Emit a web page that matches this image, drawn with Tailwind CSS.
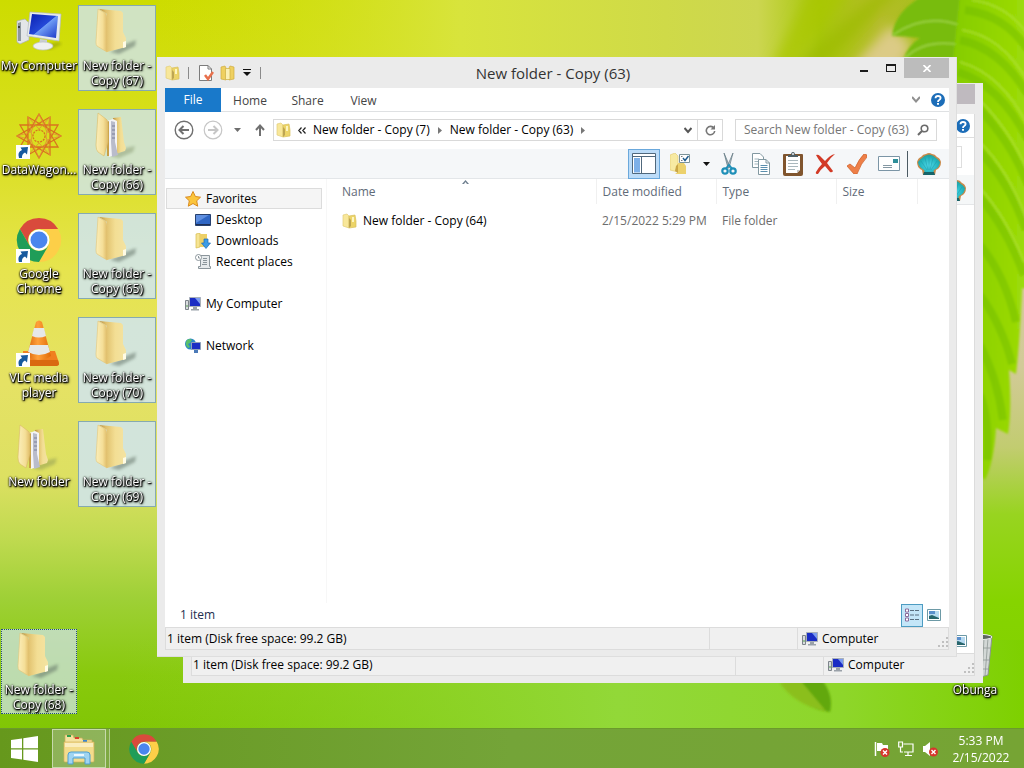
<!DOCTYPE html>
<html lang="en">
<head>
    <meta charset="UTF-8">
    <meta name="viewport" content="width=device-width, initial-scale=1.0">
    <title>New folder - Copy (63)</title>
    <script src="https://cdn.jsdelivr.net/npm/@tailwindcss/browser@4"></script>
    <style>
        body {
            font-family: 'Open Sans', 'Noto Sans', sans-serif;
        }
        .desk-label {
            color: white;
            text-shadow: 1px 1px 1px #000, 0 0 2px #000, 1px 1px 3px #000, 0 1px 2px #000;
        }
    </style>
</head>
<body class="h-screen overflow-hidden flex flex-col relative text-xs text-black bg-[#86cc14]">

    <!-- Icon sprites -->
    <svg class="absolute w-0 h-0" aria-hidden="true">
        <defs>
            <linearGradient id="gFlap" x1="0" x2="1" y1="0" y2="0"><stop offset="0" stop-color="#fbeeba"/><stop offset=".6" stop-color="#f5df98"/><stop offset="1" stop-color="#e0bc68"/></linearGradient>
            <linearGradient id="gBody" x1="0" x2="1" y1="0" y2="0"><stop offset="0" stop-color="#b98f3c"/><stop offset=".25" stop-color="#e0c06c"/><stop offset=".6" stop-color="#f3de94"/><stop offset="1" stop-color="#f3e3a2"/></linearGradient>
            <linearGradient id="gScreen" x1="0" x2="1" y1="0" y2="1"><stop offset="0" stop-color="#0a1fb0"/><stop offset=".5" stop-color="#2448d8"/><stop offset=".52" stop-color="#6f9cf5"/><stop offset="1" stop-color="#1a36c8"/></linearGradient>
            <linearGradient id="gCone" x1="0" x2="1" y1="0" y2="0"><stop offset="0" stop-color="#d9640a"/><stop offset=".45" stop-color="#ffa03a"/><stop offset="1" stop-color="#e06a08"/></linearGradient>
            <radialGradient id="gShell" cx=".5" cy=".6" r=".6"><stop offset="0" stop-color="#4fd8e8"/><stop offset=".7" stop-color="#22b3bd"/><stop offset="1" stop-color="#2a9a90"/></radialGradient>
            <filter id="soft"><feGaussianBlur stdDeviation="1.5"/></filter>
        </defs>
        <symbol id="folder" viewBox="0 0 48 48">
            <path d="M17 44L33 36L43 32L42 38L26 46Z" fill="#5b6a60" opacity=".5" filter="url(#soft)"/>
            <path d="M6 1L28 3L30 5L30 24L33 30V39L14 44V6Z" fill="url(#gBody)"/>
            <path d="M5 1L12 5Q14 6 14 10V44L4 38Q3 37 3 34Z" fill="url(#gFlap)" stroke="#e2c577" stroke-width=".6"/>
            <path d="M30 34L33 33V39L30 40Z" fill="#fffbe4"/>
        </symbol>
        <symbol id="folder-docs" viewBox="0 0 48 48">
            <path d="M17 44L33 36L42 34L40 40L26 46Z" fill="#6b7a50" opacity=".35" filter="url(#soft)"/>
            <path d="M20 6L28 5L31 30L33 36L32 39L22 42Z" fill="url(#gBody)"/>
            <path d="M14 9L20 7L24 9L24 42L16 45Z" fill="#f4f4f6"/>
            <path d="M18 9L22 10L22 30L25 43L19 45L18 30Z" fill="#b9bccb"/>
            <path d="M19 14H22M19 18H22M19 22H22M19 26H22" stroke="#7b7f9a"/>
            <path d="M14 10L16 9L16 44L14 44Z" fill="#c79f45"/>
            <path d="M5 1L13 7Q15 8 15 12L15 30L11 44L5 40Q3 38 3 33Z" fill="url(#gFlap)" stroke="#d8bb68" stroke-width=".6"/>
        </symbol>
        <symbol id="folder-sm" viewBox="0 0 16 16">
            <path d="M1 2L5 1L7 3V15L1 13Z" fill="#f8e79a" stroke="#e3cd78" stroke-width=".7"/>
            <path d="M7 3L13 2L14 8V14L7 15Z" fill="#ecd468" stroke="#d8c05c" stroke-width=".7"/>
            <path d="M7 5L9 7V13L7 15Z" fill="#bda553"/>
            <path d="M10 4H12V9H10Z" fill="#fdf5c0"/>
        </symbol>
        <symbol id="chrome" viewBox="0 0 48 48">
            <path d="M4.900 13A22 22 0 0 1 43.100 13H24A11 11 0 0 0 14.500 29.500Z" fill="#d94a3c"/>
            <path d="M43.100 13A22 22 0 0 1 24 46L33.500 29.500A11 11 0 0 0 24 13Z" fill="#fdcf48"/>
            <path d="M24 46A22 22 0 0 1 4.900 13L14.500 29.500A11 11 0 0 0 33.500 29.500Z" fill="#1f9d58"/>
            <circle cx="24" cy="24" r="10.500" fill="#fff"/>
            <circle cx="24" cy="24" r="8.500" fill="#4a86ee"/>
        </symbol>
        <symbol id="computer-sm" viewBox="0 0 16 16">
            <path d="M.5 4.500H3.500V13.500H.5Z" fill="#d9dcdf" stroke="#7d848b"/>
            <path d="M1 10H3" stroke="#55a04a"/>
            <path d="M4.500 1.500H15.500V10.500H4.500Z" fill="#1a2cc4" stroke="#a9b0b8"/>
            <path d="M10 2L15 2V8Z" fill="#7c9cf0"/>
            <path d="M8 11H12V13H14V14.500H6V13H8Z" fill="#9aa1a9"/>
        </symbol>
        <symbol id="shortcut" viewBox="0 0 14 14">
            <path d="M0 0H14V14H0Z" fill="#fff"/>
            <path d="M3 13Q1 7 6 5L4.500 2.500L12 2L11 9.500L9 7.500Q5.500 9 6 13Z" fill="#175a9e"/>
        </symbol>
        <symbol id="help" viewBox="0 0 14 14">
            <circle cx="7" cy="7" r="7" fill="#1c6db8"/>
            <path d="M4.500 5.200Q4.600 3 7 3Q9.600 3 9.600 5.100Q9.600 6.200 8.200 7Q7 7.600 7 8.900" fill="none" stroke="#fff" stroke-width="1.800"/>
            <path d="M6 9.900H8V11.800H6Z" fill="#fff"/>
        </symbol>
        <symbol id="shell" viewBox="0 0 24 24">
            <path d="M6 23L5 18Q0 16 0 10Q1 6 4 5Q6 2 9 2Q12 0 15 2Q18 2 20 5Q23 6 24 10Q24 16 19 18L18 23Z" fill="#c98a4a"/>
            <path d="M8 21L7 18Q1 15 1 10Q3 7 5 6Q8 3 10 3Q12 2 14 3Q16 3 19 6Q21 7 23 10Q23 15 17 18L16 21Z" fill="url(#gShell)"/>
            <path d="M10 18L4 9M11 18L8 6M12 18V4M13 18L16 6M14 18L20 9" stroke="#2097a6" stroke-width=".5"/>
            <path d="M7 20H17L18 23H6Z" fill="#17646a"/>
        </symbol>
        <symbol id="picture" viewBox="0 0 14 12">
            <path d="M.5 .5H13.500V11.500H.5Z" fill="#fff" stroke="#6d9aa6"/>
            <path d="M2 2H12V10H2Z" fill="#b5d9f0"/>
            <path d="M2 7L5 6L12 9V10H2Z" fill="#27656c"/>
            <path d="M2 2H8V5H2Z" fill="#5a8fcc"/>
        </symbol>
        <symbol id="grip" viewBox="0 0 10 10">
            <path d="M8 0H10V2H8ZM4 4H6V6H4ZM8 4H10V6H8ZM0 8H2V10H0ZM4 8H6V10H4ZM8 8H10V10H8Z" fill="#c0c0c0"/>
        </symbol>
    </svg>

    <!-- Wallpaper -->
    <svg class="absolute inset-0 w-full h-full" viewBox="0 0 1024 768" preserveAspectRatio="none" aria-hidden="true">
        <defs>
            <linearGradient id="sky" x1="0" x2="0" y1="0" y2="1">
                <stop offset="0" stop-color="#cddc00"/><stop offset=".2" stop-color="#dadf22"/><stop offset=".35" stop-color="#e6e44e"/>
                <stop offset=".5" stop-color="#e5e264"/><stop offset=".62" stop-color="#dde062"/><stop offset=".7" stop-color="#c0da50"/>
                <stop offset=".78" stop-color="#9ed036"/><stop offset=".88" stop-color="#88c90c"/><stop offset="1" stop-color="#7cc400"/>
            </linearGradient>
            <linearGradient id="band" x1="0" x2="1" y1="0" y2="0">
                <stop offset=".15" stop-color="#d2e010" stop-opacity="0"/><stop offset=".45" stop-color="#d8e43c"/><stop offset=".65" stop-color="#cfda48"/>
                <stop offset=".74" stop-color="#ccd650"/><stop offset=".8" stop-color="#a6c60a"/><stop offset=".86" stop-color="#b4bc28"/><stop offset="1" stop-color="#8cc800"/>
            </linearGradient>
            <linearGradient id="east" x1="0" x2="0" y1="0" y2="1">
                <stop offset="0" stop-color="#d8cfa0"/><stop offset=".4" stop-color="#d2ca98"/><stop offset=".52" stop-color="#c2cc70"/>
                <stop offset=".62" stop-color="#98d420"/><stop offset=".75" stop-color="#86d400"/><stop offset="1" stop-color="#7fcc00"/>
            </linearGradient>
            <linearGradient id="low" x1="0" x2="1" y1="0" y2="0">
                <stop offset="0" stop-color="#8cd628" stop-opacity="0"/><stop offset=".55" stop-color="#92d838"/><stop offset=".8" stop-color="#8ed62a"/><stop offset="1" stop-color="#7ed000"/>
            </linearGradient>
            <linearGradient id="leaf" x1="0" x2="1" y1="0" y2="0"><stop offset="0" stop-color="#84cc00"/><stop offset="1" stop-color="#9edc08"/></linearGradient>
            <filter id="haze"><feGaussianBlur stdDeviation="6"/></filter>
            <filter id="edge"><feGaussianBlur stdDeviation="1.200"/></filter>
        </defs>
        <path d="M0 0H1024V768H0Z" fill="url(#sky)"/>
        <path d="M0 0H1024V120H0Z" fill="url(#band)"/>
        <path d="M940 100H1024V768H940Z" fill="url(#east)"/>
        <path d="M120 640H1024V768H120Z" fill="url(#low)"/>
        <g filter="url(#haze)">
            <path d="M810 -10H850L790 70H770Z" fill="#a9c800" opacity=".7"/>
            <path d="M880 -10H900L820 70H790Z" fill="#9cba08" opacity=".7"/>
            <path d="M890 25L912 45L895 80H840Z" fill="#dccb86"/>
        </g>
        <g filter="url(#edge)">
            <path d="M925 -5H960V60H903Q908 45 920 38Q905 36 892 36Q895 10 925 -5Z" fill="#78bc10"/>
            <path d="M893 35Q925 12 962 26M905 58Q925 38 962 45" fill="none" stroke="#9ad03c" stroke-width="2"/>
            <path d="M960 -5H1030V290L1022 288Q1020 340 1016 374L1009 370Q1012 410 1008 434L996 428Q994 462 985 480L975 470V90H950Z" fill="url(#leaf)"/>
            <g fill="none" stroke="#6cb804" stroke-width="8" opacity=".4">
                <path d="M965 10Q1005 15 1028 50"/><path d="M960 40Q1000 48 1028 95"/><path d="M958 72Q1000 85 1028 140"/>
                <path d="M978 108Q1010 140 1028 185"/><path d="M980 152Q1008 180 1026 230"/><path d="M980 198Q1005 225 1024 275"/>
                <path d="M980 245Q1005 275 1016 322"/><path d="M980 295Q1002 325 1012 364"/><path d="M980 345Q998 380 1003 420"/><path d="M980 395Q990 420 987 460"/>
            </g>
            <g fill="none" stroke="#b8e63c" stroke-width="2" opacity=".6">
                <path d="M972 0Q1008 5 1028 35"/><path d="M962 30Q1002 36 1028 82"/><path d="M960 62Q1002 74 1028 126"/>
                <path d="M978 98Q1010 130 1028 172"/><path d="M980 142Q1008 170 1026 218"/><path d="M980 188Q1005 215 1024 262"/>
            </g>
            <path d="M785 683Q800 708 830 712Q834 695 822 680Z" fill="#62a80c"/>
            <path d="M780 683Q795 705 826 711L800 680Z" fill="#8bbf1c"/>
        </g>
    </svg>

    <!-- Desktop -->
    <main class="flex-1 relative min-h-0">
        <ul class="grid grid-cols-[repeat(13,78px)] auto-rows-[104px] pt-[5px] items-start text-center leading-[15px]">
            <li class="col-start-1 row-start-1 h-[85px] pt-[3px]">
                <svg class="w-12 h-12 mx-auto mb-[2px]" viewBox="0 0 48 48">
                    <path d="M26 38L44 34L47 36L34 42Z" fill="#6f7a10" opacity=".4" filter="url(#soft)"/>
                    <path d="M2 13L10 11L14 15V32L5 36L2 34Z" fill="#e3e6e8" stroke="#a9afb3" stroke-width=".7"/>
                    <path d="M3 15L6 14V33L3 33Z" fill="#8e979d"/><circle cx="4" cy="19" r="1" fill="#222"/>
                    <path d="M15 4L46 6L44 33L12 28Z" fill="#e8ebed" stroke="#b5bbc0" stroke-width=".7"/>
                    <path d="M17 6L43 8L41 30L14 26Z" fill="url(#gScreen)"/>
                    <path d="M25 31L32 32V36L24 36Z" fill="#c9ced2"/><ellipse cx="28" cy="38" rx="10" ry="4" fill="#eef0f1" stroke="#bcc2c6" stroke-width=".7"/>
                </svg>
                <span class="desk-label">My Computer</span>
            </li>
            <li class="col-start-1 row-start-2 h-[85px] pt-[3px]">
                <svg class="w-12 h-12 mx-auto mb-[2px]" viewBox="0 0 48 48" fill="none" stroke="#d9731e" stroke-width="1.300">
                    <path d="M24 2L43 35H5ZM35 5V43L2 24ZM43 13L24 46L5 13ZM46 24L13 43V5Z"/>
                    <path d="M24 2L32 20L46 24L32 28L24 46L16 28L2 24L16 20ZM35 5L31 24L35 43L24 31L13 43L17 24L13 5L24 17Z" stroke="#e08a3a" stroke-width=".8"/>
                    <circle cx="24" cy="24" r="6" stroke-dasharray="2 1"/>
                    <use href="#shortcut" x="1" y="33" width="14" height="14" stroke="none"/>
                </svg>
                <span class="desk-label">DataWagon...</span>
            </li>
            <li class="col-start-1 row-start-3 h-[85px] pt-[3px]">
                <svg class="w-12 h-12 mx-auto mb-[2px]" viewBox="0 0 48 48">
                    <use href="#chrome" width="48" height="48"/>
                    <use href="#shortcut" x="1" y="33" width="14" height="14"/>
                </svg>
                <span class="desk-label block">Google<br>Chrome</span>
            </li>
            <li class="col-start-1 row-start-4 h-[85px] pt-[3px]">
                <svg class="w-12 h-12 mx-auto mb-[2px]" viewBox="0 0 48 48">
                    <path d="M8 31L40 31L44 43Q44 46 40 46H8Z" fill="#f08020"/>
                    <path d="M8 40H43L44 44Q44 46 40 46H8Z" fill="#d96a10"/>
                    <path d="M21 2Q24 -1 27 2L36 36Q24 44 12 36Z" fill="url(#gCone)"/>
                    <path d="M19 8H29L31 16Q24 19 17 16ZM15 25H33L35 32Q24 38 13 32Z" fill="#e6e8e8"/>
                    <use href="#shortcut" x="1" y="33" width="14" height="14"/>
                </svg>
                <span class="desk-label block">VLC media<br>player</span>
            </li>
            <li class="col-start-1 row-start-5 h-[85px] pt-[3px]">
                <svg class="w-12 h-12 mx-auto mb-[2px]"><use href="#folder-docs"/></svg>
                <span class="desk-label">New folder</span>
            </li>
            <li class="col-start-1 row-start-7 h-[85px] mx-px pt-[2px] border border-dotted border-[#24507a] bg-[#cfe2e6]/75">
                <svg class="w-12 h-12 mx-auto mb-[2px]"><use href="#folder"/></svg>
                <span class="desk-label block">New folder -<br>Copy (68)</span>
            </li>
            <li class="col-start-2 row-start-1 h-[86px] pt-[2px] border border-[#86aab0] bg-[#d0e4e4]/85">
                <svg class="w-12 h-12 mx-auto mb-[2px]"><use href="#folder"/></svg>
                <span class="desk-label block">New folder -<br>Copy (67)</span>
            </li>
            <li class="col-start-2 row-start-2 h-[86px] pt-[2px] border border-[#86aab0] bg-[#d0e4e4]/85">
                <svg class="w-12 h-12 mx-auto mb-[2px]"><use href="#folder-docs"/></svg>
                <span class="desk-label block">New folder -<br>Copy (66)</span>
            </li>
            <li class="col-start-2 row-start-3 h-[86px] pt-[2px] border border-[#86aab0] bg-[#d0e4e8]/90">
                <svg class="w-12 h-12 mx-auto mb-[2px]"><use href="#folder"/></svg>
                <span class="desk-label block">New folder -<br>Copy (65)</span>
            </li>
            <li class="col-start-2 row-start-4 h-[86px] pt-[2px] border border-[#86aab0] bg-[#d0e4e8]/90">
                <svg class="w-12 h-12 mx-auto mb-[2px]"><use href="#folder"/></svg>
                <span class="desk-label block">New folder -<br>Copy (70)</span>
            </li>
            <li class="col-start-2 row-start-5 h-[86px] pt-[2px] border border-[#86aab0] bg-[#d0e4e8]/90">
                <svg class="w-12 h-12 mx-auto mb-[2px]"><use href="#folder"/></svg>
                <span class="desk-label block">New folder -<br>Copy (69)</span>
            </li>
            <li class="col-start-13 row-start-7 h-[85px] pt-[3px]">
                <svg class="w-12 h-12 mx-auto mb-[2px]" viewBox="0 0 48 48">
                    <path d="M8 4L41 4L37 43Q24 48 12 43Z" fill="#d3d8d6" stroke="#8b9490"/>
                    <path d="M33 6L31 45M37 6L34 44M10 16H40M11 28H39M12 37H38" stroke="#8f9895" stroke-width=".8"/>
                    <ellipse cx="24" cy="5" rx="17" ry="3" fill="#5d6663" stroke="#e8ecea"/>
                </svg>
                <span class="desk-label">Obunga</span>
            </li>
        </ul>

        <!-- Window behind -->
        <section class="absolute left-[183px] right-[41px] top-[83px] bottom-[45px] bg-[#ebebeb] px-2 pb-[7px] flex flex-col" aria-label="Background window">
            <div class="h-[31px] flex justify-end"><div class="w-[45px] h-5 mt-px bg-[#bfbabf]"></div></div>
            <div class="flex-1 flex flex-col bg-white border-r border-[#dcdcdc]">
                <div class="h-6 flex items-center justify-end pr-1 border-b border-[#dedede]"><svg class="w-[14px] h-[14px]"><use href="#help"/></svg></div>
                <div class="h-[37px] flex items-center justify-end pr-3"><div class="w-[202px] h-[22px] border border-[#dedede]"></div></div>
                <div class="h-[30px] flex items-center justify-end pr-2 bg-[#f5f7f8] border-b border-[#e4e6e8]"><svg class="w-6 h-6"><use href="#shell"/></svg></div>
                <div class="flex-1"></div>
                <div class="h-6 flex items-center justify-end pr-[7px]"><svg class="w-[14px] h-3"><use href="#picture"/></svg></div>
            </div>
            <footer class="h-[23px] flex items-center bg-[#f0f0f0] border border-[#dcdcdc]">
                <span class="flex-1 pl-px">1 item (Disk free space: 99.2 GB)</span>
                <span class="w-[89px] h-full border-x border-[#dcdcdc]"></span>
                <span class="w-[150px] flex items-center gap-1 pl-1"><svg class="w-4 h-4"><use href="#computer-sm"/></svg>Computer
                    <svg class="w-[10px] h-[10px] ml-auto self-end"><use href="#grip"/></svg>
                </span>
            </footer>
        </section>

        <!-- Explorer window -->
        <section class="absolute left-[157px] right-[67px] top-[57px] bottom-[71px] bg-[#ebebeb] px-2 pb-[7px] flex flex-col shadow-[inset_-1px_-1px_0_#dedede]">
            <!-- Title bar -->
            <header class="h-[31px] shrink-0 flex items-center">
                <div class="flex-1 flex items-center text-[#8a8a8a]">
                    <svg class="w-4 h-4"><use href="#folder-sm"/></svg>
                    <span class="w-px h-3 ml-[7px] bg-[#8a8a8a]"></span>
                    <button class="ml-[9px]" aria-label="Properties">
                        <svg class="w-4 h-4" viewBox="0 0 16 16"><path d="M1.500 .5H10L13.500 4V15.500H1.500Z" fill="#fff" stroke="#7c7c7c"/><path d="M10 .5V4H13.500" fill="none" stroke="#7c7c7c"/><path d="M7 10L10 14L15 7" fill="none" stroke="#e8704c" stroke-width="2.500"/></svg>
                    </button>
                    <button class="ml-[6px]" aria-label="New folder"><svg class="w-4 h-4" viewBox="0 0 16 16"><path d="M1 2L5 1L6 3V15L1 14ZM9 3L10 1L14 2V14L9 15Z" fill="#efd060" stroke="#cfac40" stroke-width=".7"/><path d="M5.500 3.500H10V14.500H5.500Z" fill="#fbf0b4" stroke="#cfb043" stroke-width=".7"/></svg></button>
                    <button class="ml-[7px]" aria-label="Customize toolbar"><svg class="w-2 h-[7px]" viewBox="0 0 8 7"><path d="M0 0H8V1H0ZM0 3H8L4 7Z" fill="#111"/></svg></button>
                    <span class="w-px h-3 ml-[9px] bg-[#8a8a8a]"></span>
                </div>
                <h1 class="text-[15px] leading-[20px] text-[#333] pr-2">New folder - Copy (63)</h1>
                <div class="flex-1 flex justify-end self-start mt-px">
                    <button class="w-[27px] h-5 grid place-items-center" aria-label="Minimize"><svg class="w-2 h-5" viewBox="0 0 8 20"><path d="M0 12H8V14H0Z" fill="#1b1b1b"/></svg></button>
                    <button class="w-[27px] h-5 grid place-items-center" aria-label="Maximize"><svg class="w-[10px] h-2" viewBox="0 0 10 8"><path d="M0 0H10V8H0ZM1 2V7H9V2Z" fill="#1b1b1b" fill-rule="evenodd"/></svg></button>
                    <button class="w-[45px] h-5 grid place-items-center bg-[#bcbcbc]" aria-label="Close"><svg class="w-2 h-[7px]" viewBox="0 0 8 7"><path d="M.5 0L7.500 7M7.500 0L.5 7" stroke="#fff" stroke-width="1.700"/></svg></button>
                </div>
            </header>

            <!-- Ribbon tabs -->
            <nav class="h-6 shrink-0 flex items-center bg-white border-b border-[#dfe1e3] text-[#444]">
                <button class="w-14 h-6 bg-[#1979ca] text-white">File</button>
                <button class="w-[58px] pt-[2px]">Home</button>
                <button class="w-[57px] pt-[2px]">Share</button>
                <button class="w-[55px] pt-[2px]">View</button>
                <button class="ml-auto" aria-label="Expand ribbon"><svg class="w-2 h-[7px]" viewBox="0 0 8 7"><path d="M0 1L4 5.500L8 1" fill="none" stroke="#8f8f8f" stroke-width="2"/></svg></button>
                <button class="ml-[11px] mr-1" aria-label="Help"><svg class="w-[14px] h-[14px]"><use href="#help"/></svg></button>
            </nav>

            <!-- Address bar -->
            <div class="h-[37px] shrink-0 flex items-center bg-white pl-[9px] pr-3 pb-px">
                <button aria-label="Back"><svg class="w-5 h-5" viewBox="0 0 20 20" fill="none" stroke="#707070"><circle cx="10" cy="10" r="8.800" stroke-width="1.400"/><path d="M15 10H6M9.500 6L5.500 10L9.500 14" stroke-width="2"/></svg></button>
                <button class="ml-[9px]" aria-label="Forward"><svg class="w-5 h-5" viewBox="0 0 20 20" fill="none" stroke="#c6c6c6"><circle cx="10" cy="10" r="8.800" stroke-width="1.200"/><path d="M5 10H14M10.500 6L14.500 10L10.500 14" stroke-width="2"/></svg></button>
                <button class="ml-[11px]" aria-label="Recent locations"><svg class="w-[7px] h-1" viewBox="0 0 7 4"><path d="M0 0H7L3.500 4Z" fill="#6e6e6e"/></svg></button>
                <button class="ml-[14px] mr-2" aria-label="Up"><svg class="w-[10px] h-3" viewBox="0 0 10 12"><path d="M5 12V2M1 6L5 1.500L9 6" fill="none" stroke="#707070" stroke-width="2"/></svg></button>
                <div class="flex-1 h-[22px] flex items-center border border-[#d9d9d9] pl-[2px]">
                    <svg class="w-4 h-4"><use href="#folder-sm"/></svg>
                    <svg class="w-2 h-[7px] ml-[6px] mr-[7px]" viewBox="0 0 8 7"><path d="M3.500 .5L.8 3.500L3.500 6.500M7.500 .5L4.800 3.500L7.500 6.500" fill="none" stroke="#222" stroke-width="1.200"/></svg>
                    <a href="#">New folder - Copy (7)</a>
                    <svg class="w-1 h-[7px] mx-2" viewBox="0 0 4 7"><path d="M0 0L4 3.500L0 7Z" fill="#777"/></svg>
                    <a href="#">New folder - Copy (63)</a>
                    <svg class="w-1 h-[7px] mx-2" viewBox="0 0 4 7"><path d="M0 0L4 3.500L0 7Z" fill="#777"/></svg>
                    <button class="ml-auto mr-[5px]" aria-label="Previous locations"><svg class="w-2 h-[7px]" viewBox="0 0 8 7"><path d="M.5 1L4 5L7.500 1" fill="none" stroke="#555" stroke-width="2"/></svg></button>
                    <button class="w-[25px] h-full grid place-items-center border-l border-[#d9d9d9]" aria-label="Refresh"><svg class="w-[11px] h-[11px]" viewBox="0 0 11 11"><path d="M9 3.200A4.200 4.200 0 1 0 9.700 6" fill="none" stroke="#777" stroke-width="1.600"/><path d="M10 0V4.500H5.500Z" fill="#777"/></svg></button>
                </div>
                <label class="w-[202px] h-[22px] ml-3 flex items-center border border-[#d9d9d9] pl-2 pr-[7px]">
                    <input type="text" class="flex-1 min-w-0 outline-none placeholder:text-[#767676]" placeholder="Search New folder - Copy (63)" aria-label="Search">
                    <svg class="w-3 h-3" viewBox="0 0 12 12"><circle cx="7.500" cy="4.500" r="3.300" fill="none" stroke="#6a6a6a" stroke-width="1.600"/><path d="M5 7L1 11" stroke="#6a6a6a" stroke-width="2"/></svg>
                </label>
            </div>

            <!-- Toolbar -->
            <div class="h-[30px] shrink-0 flex items-center justify-end bg-[#f5f7f9] border-b border-[#e3e6e9] pr-1">
                <button class="w-8 h-[30px] grid place-items-center bg-[#bcdcf8] border border-[#6aa8dc]" aria-label="Navigation pane"><svg class="w-6 h-[21px]" viewBox="0 0 24 21"><path d="M.5 .5H23.500V20.500H.5Z" fill="#fff" stroke="#50687c"/><path d="M1 3.500H23M9.500 3V20" stroke="#50687c"/><path d="M2 5H8V19.500H2Z" fill="#7db0e8"/></svg></button>
                <button class="w-10 h-[30px] grid place-items-center" aria-label="Folder options"><svg class="w-5 h-[22px]" viewBox="0 0 20 22"><path d="M0 2L5 0L8 3V19L0 17Z" fill="#f7eaa2" stroke="#e0c869" stroke-width=".6"/><path d="M8 10H14L16 13V21L5 21L8 19Z" fill="#ecd16c"/><path d="M6 13L8 11V20L5 18Z" fill="#c9a646"/><path d="M9.500 1.500H19.500V9.500H9.500Z" fill="#fff" stroke="#7c9399"/><path d="M11 3.500H12.500M11 7.500H12.500" stroke="#777"/><path d="M13 5L15 7.500L18.500 3" fill="none" stroke="#1c5a8c" stroke-width="1.400"/></svg></button>
                <button class="w-[13px] h-[30px] grid place-items-center" aria-label="More options"><svg class="w-[7px] h-1" viewBox="0 0 7 4"><path d="M0 0H7L3.500 4Z" fill="#111"/></svg></button>
                <button class="w-8 h-[30px] grid place-items-center" aria-label="Cut"><svg class="w-4 h-6" viewBox="0 0 16 24"><path d="M3 1L9 15L7 16Z" fill="#9ab0ba" stroke="#60757f" stroke-width=".7"/><path d="M12 1L6 15L8 16Z" fill="#c3d0d6" stroke="#60757f" stroke-width=".7"/><circle cx="4" cy="19" r="2.700" fill="none" stroke="#1e8fb8" stroke-width="2.200"/><circle cx="12" cy="19" r="2.700" fill="none" stroke="#1e8fb8" stroke-width="2.200"/><path d="M5 16.500L8 13L11 16.500" fill="none" stroke="#1e8fb8" stroke-width="1.800"/></svg></button>
                <button class="w-8 h-[30px] grid place-items-center" aria-label="Copy"><svg class="w-[18px] h-[22px]" viewBox="0 0 18 22" stroke="#8298a1"><path d="M.5 .5H8L11.500 4V14.500H.5Z" fill="#fff"/><path d="M2.500 6H7M2.500 8.500H6M2.500 11H6" stroke="#9fb4bd"/><path d="M6.500 6.500H14L17.500 10V21.500H6.500Z" fill="#fff"/><path d="M14 6.500V10H17.500" fill="none"/><path d="M8.500 12.500H15.500M8.500 14.500H15.500M8.500 16.500H15.500M8.500 18.500H15.500" stroke="#5b8fae"/></svg></button>
                <button class="w-8 h-[30px] grid place-items-center" aria-label="Paste"><svg class="w-5 h-6" viewBox="0 0 20 24"><path d="M0 3Q0 2 1 2H19Q20 2 20 3V22Q20 24 18 24H2Q0 24 0 22Z" fill="#80552e"/><path d="M3 4H17V18L14 21H3Z" fill="#fff"/><path d="M17 18L14 21V18Z" fill="#c4c4c4"/><path d="M5 8.500H15M5 11.500H15M5 14.500H15M5 17.500H12" stroke="#aab8bd"/><path d="M5 5V3H8Q8 0 10 0Q12 0 12 3H15V5Z" fill="#4f5f66"/><circle cx="10" cy="2" r=".9" fill="#fff"/></svg></button>
                <button class="w-8 h-[30px] grid place-items-center" aria-label="Delete"><svg class="w-5 h-5" viewBox="0 0 20 20"><path d="M1 1Q3 0 5 2L10 7Q15 1 20 0Q15 4 12 9L18 17Q17 19 15 18L10 12Q6 15 3 20Q0 20 1 18Q4 13 7 10Q3 5 1 1Z" fill="#d23a26"/></svg></button>
                <button class="w-8 h-[30px] grid place-items-center" aria-label="Rename"><svg class="w-5 h-5" viewBox="0 0 20 20"><path d="M0 12L3 10L8 14Q12 5 17 0L20 1L20 3Q14 9 10 20H7Z" fill="#ee7f48" stroke="#d0642e" stroke-width=".8"/></svg></button>
                <button class="w-8 h-[30px] grid place-items-center" aria-label="Properties"><svg class="w-[22px] h-[15px]" viewBox="0 0 22 15"><path d="M.5 .5H21.500V14.500H.5Z" fill="#fff" stroke="#7b95a6"/><path d="M15 3H20V7H15Z" fill="#2f8f9a"/><path d="M5 9.500H14M5 11.500H14" stroke="#8497a2"/></svg></button>
                <span class="w-px h-[26px] ml-[2px] mr-[5px] bg-[#4b5a63]"></span>
                <button class="w-8 h-[30px] grid place-items-center" aria-label="Classic Explorer"><svg class="w-6 h-6"><use href="#shell"/></svg></button>
            </div>

            <!-- Content -->
            <div class="flex-1 min-h-0 flex bg-white">
                <aside class="w-[162px] shrink-0 border-r border-[#f7f7f7] pt-[9px] pr-1 pl-px">
                    <ul>
                        <li class="h-[21px] flex items-center gap-[5px] pl-[18px] bg-[#f5f5f5] border border-[#dcdcdc]">
                            <svg class="w-4 h-4" viewBox="0 0 16 16"><path d="M8 .5L10.400 5.500L15.500 6.200L11.700 9.800L12.700 15.200L8 12.500L3.300 15.200L4.300 9.800L.5 6.200L5.600 5.500Z" fill="#fbc53c" stroke="#d98a1e"/></svg>Favorites
                        </li>
                        <li class="h-[21px] flex items-center gap-[5px] pl-[29px]">
                            <svg class="w-4 h-4" viewBox="0 0 16 16"><path d="M.5 2.500H15.500V13.500H.5Z" fill="#2f66c4" stroke="#27406e"/><path d="M1 3H14L1 11Z" fill="#5f8fe0"/><path d="M1 12H15V13H1Z" fill="#1d2f55"/></svg>Desktop
                        </li>
                        <li class="h-[21px] flex items-center gap-[5px] pl-[29px]">
                            <svg class="w-4 h-4" viewBox="0 0 16 16"><path d="M1 1L5 0V14L1 15Z" fill="#f6e493" stroke="#d7bb4e" stroke-width=".7"/><path d="M5 1H12V14H5Z" fill="#edd067"/><path d="M9 6H13V10H15.500L11 15.500L6.500 10H9Z" fill="#3b9be6" stroke="#1d6cb4" stroke-width=".7"/></svg>Downloads
                        </li>
                        <li class="h-[21px] flex items-center gap-[5px] pl-[29px]">
                            <svg class="w-4 h-4" viewBox="0 0 16 16" fill="#fff" stroke="#8b959b"><path d="M5.500 1.500H14.500V12.500H15.500V14.500H3.500V12.500H5.500Z" fill="#e6eaec"/><circle cx="3.500" cy="3.500" r="3"/><path d="M3.500 2V4H5M8 4.500H12M8 6.500H12M8 8.500H12M7 10.500H12"/></svg>Recent places
                        </li>
                        <li class="h-[21px] mt-[21px] flex items-center gap-[5px] pl-[19px]"><svg class="w-4 h-4"><use href="#computer-sm"/></svg>My Computer</li>
                        <li class="h-[21px] mt-[21px] flex items-center gap-[5px] pl-[19px]">
                            <svg class="w-4 h-4" viewBox="0 0 16 16"><circle cx="5.500" cy="6" r="5.500" fill="#2a86c8"/><path d="M2 2Q5 0 7 2L5 5L3 6L5 9L3 10Q0 7 1 4Z" fill="#59c06a"/><path d="M6.500 4.500H15.500V11.500H6.500Z" fill="#1a2cc4" stroke="#8fa0b8"/><path d="M9 12H13V15H9Z" fill="#4b7ab8"/></svg>Network
                        </li>
                    </ul>
                </aside>
                <div class="flex-1 pl-2 relative">
                    <svg class="absolute left-[135px] top-px w-[7px] h-[4px]" viewBox="0 0 7 4"><path d="M0 4L3.500 0L7 4H5L3.500 2L2 4Z" fill="#6f7f8f"/></svg>
                    <table class="table-fixed w-[582px] text-left text-[#6d6d6d]">
                        <thead>
                            <tr class="h-[25px] text-[#5f6b78]">
                                <th class="w-[261px] pl-[7px] font-normal border-r border-[#f0f0f0]">Name</th>
                                <th class="w-[120px] pl-[6px] font-normal border-r border-[#f0f0f0]">Date modified</th>
                                <th class="w-[120px] pl-[6px] font-normal border-r border-[#f0f0f0]">Type</th>
                                <th class="w-[81px] pl-[6px] font-normal border-r border-[#f0f0f0]">Size</th>
                            </tr>
                        </thead>
                        <tbody>
                            <tr>
                                <td class="pt-[6px] pl-[7px]"><div class="h-[21px] flex items-center gap-[5px] text-black"><svg class="w-4 h-4"><use href="#folder-sm"/></svg>New folder - Copy (64)</div></td>
                                <td class="pt-[6px] pl-[6px] whitespace-nowrap">2/15/2022 5:29 PM</td>
                                <td class="pt-[6px] pl-[6px]">File folder</td>
                                <td></td>
                            </tr>
                        </tbody>
                    </table>
                </div>
            </div>
            <div class="h-6 shrink-0 flex items-center bg-white pl-[15px] pr-2">
                <span class="flex-1 text-[#1e2f50]">1 item</span>
                <button class="w-[22px] h-[23px] grid place-items-center bg-[#c4e6f8] border border-[#4d9cc2]" aria-label="Details view"><svg class="w-4 h-[14px]" viewBox="0 0 16 14"><path d="M1.500 1H4.500V4H1.500ZM1.500 5.500H4.500V8.500H1.500ZM1.500 10H4.500V13H1.500Z" fill="#fff" stroke="#8a6a9a"/><path d="M6 2.500H16M6 7H16M6 11.500H16" stroke="#5a6f80" stroke-width="1" stroke-dasharray="4 1"/></svg></button>
                <button class="ml-[4px]" aria-label="Thumbnail view"><svg class="w-[14px] h-3"><use href="#picture"/></svg></button>
            </div>

            <!-- Status bar -->
            <footer class="h-[23px] shrink-0 flex items-center bg-[#f0f0f0] border border-[#dcdcdc]">
                <span class="flex-1 pl-px">1 item (Disk free space: 99.2 GB)</span>
                <span class="w-[89px] h-full border-x border-[#dcdcdc]"></span>
                <span class="w-[150px] flex items-center gap-1 pl-1"><svg class="w-4 h-4"><use href="#computer-sm"/></svg>Computer
                    <svg class="w-[10px] h-[10px] ml-auto self-end"><use href="#grip"/></svg>
                </span>
            </footer>
        </section>
    </main>

    <!-- Taskbar -->
    <nav class="relative h-10 shrink-0 flex items-center bg-linear-to-r from-[#66981c] via-[#74a438] to-[#76a434] border-t border-[#6b9a2c]">
        <button class="w-[52px] pl-[11px]" aria-label="Start"><svg class="w-[27px] h-[26px]" viewBox="0 0 27 26"><path d="M0 4L11 2.500V12.300H0ZM12.300 2.200L27 0V12.300H12.300ZM0 13.600H11V23.400L0 22ZM12.300 13.600H27V26L12.300 23.700Z" fill="#fff"/></svg></button>
        <button class="w-[54px] h-[39px] grid place-items-center bg-white/25 border border-white/50" aria-label="File Explorer">
            <svg class="w-8 h-8" viewBox="0 0 32 32">
                <path d="M2 2H10L11 5H19L20 7H29V11H2Z" fill="#f5e2a0" stroke="#cfae5a" stroke-width=".7"/>
                <path d="M4 2H8V4H4Z" fill="#2fa04a"/><path d="M12 4H16V6H12Z" fill="#d8402c"/><path d="M20 7H24V9H20Z" fill="#3a86d0"/>
                <path d="M1 9H31V28Q31 29 30 29H2Q1 29 1 28Z" fill="#f3dc8c" stroke="#d2b25c" stroke-width=".7"/>
                <path d="M2 10H30V14H2Z" fill="#faedbe"/>
                <path d="M5 31V22Q5 19 8 19H24Q27 19 27 22V31H22V25H10V31Z" fill="#9fd4f2" stroke="#4f9fd0"/>
                <path d="M11 22H21" stroke="#eaf7ff" stroke-width="2"/>
            </svg>
        </button>
        <span class="w-1 h-[39px] bg-white/15 border-r border-white/40"></span>
        <button class="ml-[18px]" aria-label="Google Chrome"><svg class="w-8 h-8"><use href="#chrome"/></svg></button>
        <div class="ml-auto flex items-center gap-2 text-white">
            <svg class="w-4 h-4" viewBox="0 0 16 16"><path d="M1.500 1V15" stroke="#fff" stroke-width="1.500"/><path d="M3 2H8L9 4H14V10H3Z" fill="#fff"/><circle cx="11" cy="11.500" r="4.500" fill="#d6352c"/><path d="M9 9.500L13 13.500M13 9.500L9 13.500" stroke="#fff" stroke-width="1.400"/></svg>
            <svg class="w-4 h-4" viewBox="0 0 16 16" fill="none" stroke="#fff" stroke-width="1.200"><path d="M5.500 3H15V11H6M10 11V14M7 14.500H14M.7 1H4.500V6H.7ZM2.500 6V11H5"/></svg>
            <svg class="w-4 h-4" viewBox="0 0 16 16"><path d="M1 5H3L8 1V15L3 11H1Z" fill="#fff"/><circle cx="11.500" cy="11" r="4.500" fill="#d6352c"/><path d="M9.500 9L13.500 13M13.500 9L9.500 13" stroke="#fff" stroke-width="1.400"/></svg>
            <time class="w-[70px] mr-2 text-center leading-[17px]">5:33 PM<br>2/15/2022</time>
        </div>
    </nav>
</body>
</html>
